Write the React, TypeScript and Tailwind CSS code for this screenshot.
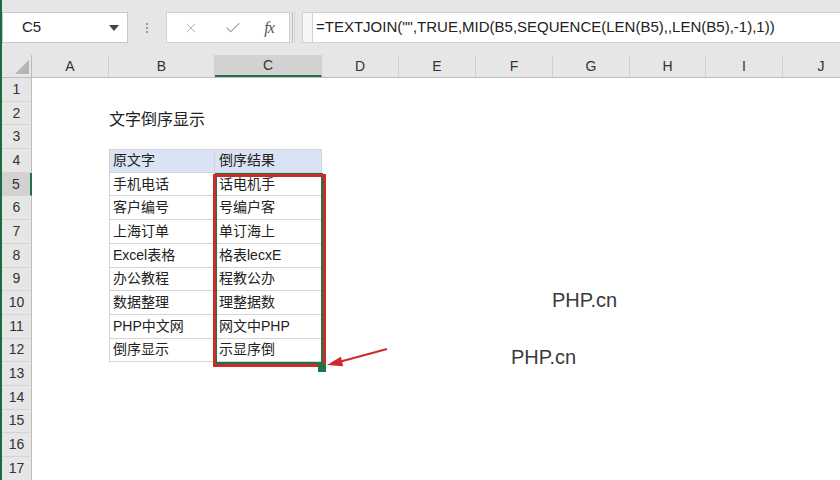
import React from 'react';
import { X, Check } from 'lucide-react';

const COLS = [
    { k: 'A', w: 'w-[77px]' },
    { k: 'B', w: 'w-[106px]' },
    { k: 'C', w: 'w-[107px]' },
    { k: 'D', w: 'w-[77px]' },
    { k: 'E', w: 'w-[77px]' },
    { k: 'F', w: 'w-[77px]' },
    { k: 'G', w: 'w-[77px]' },
    { k: 'H', w: 'w-[76px]' },
    { k: 'I', w: 'w-[77px]' },
    { k: 'J', w: 'w-[77px]' },
];

const DATA: [string, string][] = [
    ['手机电话', '话电机手'],
    ['客户编号', '号编户客'],
    ['上海订单', '单订海上'],
    ['Excel表格', '格表lecxE'],
    ['办公教程', '程教公办'],
    ['数据整理', '理整据数'],
    ['PHP中文网', '网文中PHP'],
    ['倒序显示', '示显序倒'],
];

const FORMULA = '=TEXTJOIN("",TRUE,MID(B5,SEQUENCE(LEN(B5),,LEN(B5),-1),1))';

const Cell: React.FC<{ col: number; row: number }> = ({ col, row }) => {
    const w = COLS[col].w;
    // title in B2
    if (row === 2 && col === 1) {
        return (
            <div className={`${w} h-full shrink-0 pt-[10px] leading-none overflow-visible whitespace-nowrap text-[16px] text-[#222]`}>
                文字倒序显示
            </div>
        );
    }
    const inTable = row >= 4 && row <= 12 && (col === 1 || col === 2);
    if (!inTable) return <div className={`${w} h-full shrink-0`} />;

    const isHead = row === 4;
    const text = isHead ? (col === 1 ? '原文字' : '倒序结果') : DATA[row - 5][col - 1];
    return (
        <div
            className={`${w} h-full shrink-0 flex items-center whitespace-nowrap text-[14px] text-[#222] border-b border-r border-[#d4d4d4] ${
                isHead ? 'bg-[#dae3f3] border-t' : 'bg-white'
            } ${col === 1 ? 'border-l pl-[3px]' : 'pl-[4px]'}`}
        >
            {text}
        </div>
    );
};

const App: React.FC = () => {
    const rows = Array.from({ length: 17 }, (_, i) => i + 1);

    return (
        <div className="relative w-[840px] h-[480px] overflow-hidden bg-white border-l-2 border-[#1e6b41] font-['Liberation_Sans','Noto_Sans_CJK_SC',sans-serif]">
            {/* Formula Bar */}
            <div className="h-[55px] bg-[#e6e6e6] flex items-start pt-[12px]">
                <div className="w-[126px] h-[31px] bg-white border border-[#c8c8c8] flex items-center justify-between pl-[19px] pr-[8px] text-[15px] text-[#222]">
                    <span>C5</span>
                    <span className="w-0 h-0 border-l-[5px] border-r-[5px] border-t-[6px] border-l-transparent border-r-transparent border-t-[#444]" />
                </div>
                <div className="w-[38px] h-[31px] flex flex-col items-center justify-center gap-[2px]">
                    <span className="w-[2px] h-[2px] bg-[#9a9a9a]" />
                    <span className="w-[2px] h-[2px] bg-[#9a9a9a]" />
                    <span className="w-[2px] h-[2px] bg-[#9a9a9a]" />
                </div>
                <div className="w-[124px] h-[31px] bg-white border border-[#d0d0d0] flex items-center">
                    <div className="w-[44px] flex justify-center pl-[4px]">
                        <X size={16} strokeWidth={1.3} color="#a8a8a8" />
                    </div>
                    <div className="w-[44px] flex justify-center">
                        <Check size={18} strokeWidth={1.5} color="#a8a8a8" />
                    </div>
                    <div className="flex-1 flex justify-center pr-[6px] font-['Liberation_Serif',serif] italic text-[16px] text-[#555] tracking-[-1px]">
                        fx
                    </div>
                </div>
                <div className="w-[12px] h-[31px] flex">
                    <span className="ml-[2px] w-px h-full bg-[#c4c4c4]" />
                    <span className="ml-[1px] w-px h-full bg-[#d8d8d8]" />
                </div>
                <div className="flex-1 h-[31px] bg-white border-y border-l border-[#d0d0d0] flex items-center">
                    <div className="w-[10px] h-full border-r border-[#d0d0d0] bg-[#f6f6f6]" />
                    <span className="pl-[3px] text-[15px] text-[#222] whitespace-nowrap">{FORMULA}</span>
                </div>
            </div>

            {/* Column Headers */}
            <div className="h-[23px] flex bg-[#e6e6e6] border-b border-[#bdbdbd]">
                <div className="w-[30px] h-full shrink-0 relative border-r border-[#bdbdbd]">
                    <svg className="absolute left-[13px] top-[5px]" width="14" height="14" viewBox="0 0 14 14">
                        <polygon points="14,0 14,14 0,14" fill="#b5b5b5" />
                    </svg>
                </div>
                {COLS.map((c) => (
                    <div
                        key={c.k}
                        className={`${c.w} h-full shrink-0 flex items-center justify-center text-[14px] text-[#333] border-r border-[#cfcfcf] ${
                            c.k === 'C' ? 'bg-[#d2d2d2] border-b-2 border-b-[#217346]' : ''
                        }`}
                    >
                        {c.k}
                    </div>
                ))}
            </div>

            {/* Rows */}
            {rows.map((r) => (
                <div key={r} className="h-[23.7px] flex">
                    <div
                        className={`w-[30px] h-full shrink-0 flex items-center justify-center text-[14px] text-[#333] border-b border-[#d4d4d4] ${
                            r === 5 ? 'bg-[#d2d2d2] border-r-2 border-r-[#217346]' : 'bg-[#e6e6e6] border-r border-r-[#bdbdbd]'
                        }`}
                    >
                        {r}
                    </div>
                    {COLS.map((c, i) => (
                        <Cell key={c.k} col={i} row={r} />
                    ))}
                </div>
            ))}

            {/* Selection C5:C12 */}
            <div className="absolute left-[213px] top-[173px] w-[108px] h-[191px] border-2 border-[#217346] pointer-events-none" />

            {/* Red annotation */}
            <div className="absolute left-[211px] top-[174px] w-[113px] h-[193px] border-[3px] border-[#cc2b2b] pointer-events-none" />
            <div className="absolute left-[316px] top-[364px] w-[8px] h-[8px] bg-[#217346] pointer-events-none" />
            <svg className="absolute left-0 top-0 pointer-events-none" width="840" height="480" viewBox="0 0 840 480">
                <line x1="385" y1="349" x2="337" y2="362" stroke="#d0292b" strokeWidth="2" />
                <polygon points="325,365 338.8,356.7 341.2,366.3" fill="#d0292b" />
            </svg>

            {/* Watermark text */}
            <span className="absolute left-[550px] top-[285px] text-[20px] text-[#3a3a3a] font-['Liberation_Sans',sans-serif]">PHP.cn</span>
            <span className="absolute left-[509px] top-[342px] text-[20px] text-[#3a3a3a] font-['Liberation_Sans',sans-serif]">PHP.cn</span>
        </div>
    );
};

export default App;
